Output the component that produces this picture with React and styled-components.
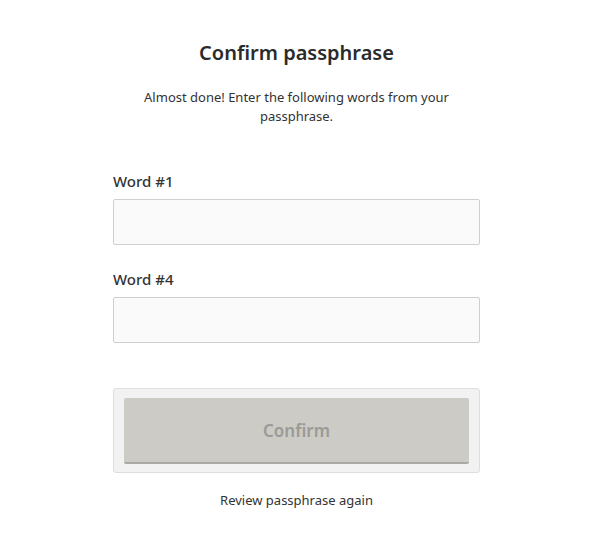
import React from 'react';
import styled, { createGlobalStyle } from 'styled-components';

const GlobalStyle = createGlobalStyle`
    body {
        margin: 0;
        background: #ffffff;
        font-family: "Noto Sans", "Open Sans", sans-serif;
        color: #333333;
    }
`;

//Confirm passphrase page
function App(){
    return (<Page>
                <GlobalStyle />
                <Title> Confirm passphrase </Title>
                <Intro>
                    Almost done! Enter the following words from your passphrase.
                </Intro>
                <Form>
                    <Field>
                        <Label htmlFor='word1'>Word #1</Label>
                        <Input id='word1' type='text' />
                    </Field>
                    <Field>
                        <Label htmlFor='word4'>Word #4</Label>
                        <Input id='word4' type='text' />
                    </Field>
                    <ButtonWell>
                        <ConfirmButton disabled> Confirm </ConfirmButton>
                    </ButtonWell>
                    <ReviewLink href='#'> Review passphrase again </ReviewLink>
                </Form>
            </Page>);
}

const Page = styled.div`
    display: flex;
    flex-direction: column;
    align-items: center;
    padding-top: 39px;
    padding-right: 15px;
`;

const Title = styled.h1`
    margin: 0;
    font-size: 20px;
    font-weight: 600;
    line-height: 28px;
    color: #2b2b2b;
`;

const Intro = styled.p`
    margin: 21px 0 0 0;
    width: 330px;
    text-align: center;
    font-size: 13px;
    line-height: 19px;
    color: #333333;
`;

const Form = styled.div`
    width: 367px;
    margin-top: 45px;
    display: flex;
    flex-direction: column;
`;

const Field = styled.div`
    display: flex;
    flex-direction: column;
    margin-bottom: 24px;
`;

const Label = styled.label`
    font-size: 15px;
    font-weight: 500;
    line-height: 20px;
    color: #333333;
    margin-bottom: 8px;
`;

const Input = styled.input`
    box-sizing: border-box;
    height: 46px;
    width: 100%;
    border: 1px solid #cfcfcf;
    border-radius: 2px;
    background: #fafafa;
    font-family: inherit;
    font-size: 15px;
    padding: 0 10px;
    outline: none;
`;

const ButtonWell = styled.div`
    box-sizing: border-box;
    margin-top: 21px;
    padding: 9px 10px 8px;
    background: #f2f2f2;
    border: 1px solid #dedede;
    border-radius: 3px;
`;

const ConfirmButton = styled.button`
    display: block;
    width: 100%;
    height: 66px;
    border: none;
    border-bottom: 2px solid #a9a9a5;
    border-radius: 2px;
    background: #cccbc6;
    color: #9a9a96;
    font-family: inherit;
    font-size: 17px;
    font-weight: 600;
`;

const ReviewLink = styled.a`
    margin-top: 18px;
    align-self: center;
    font-size: 13px;
    line-height: 18px;
    color: #333333;
    text-decoration: none;
`;

export default App;
